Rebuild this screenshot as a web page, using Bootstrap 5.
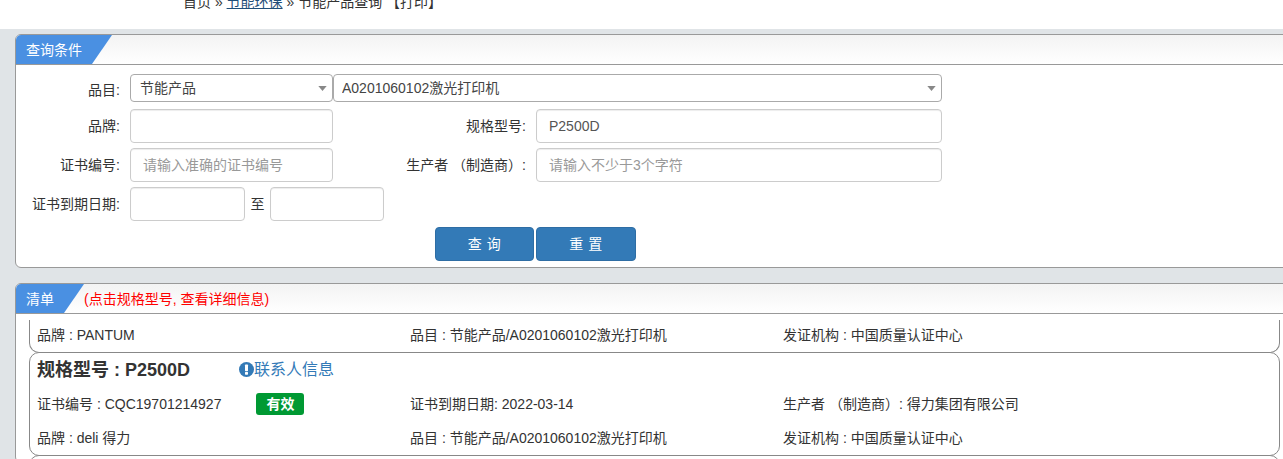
<!DOCTYPE html>
<html lang="zh-CN">
<head>
<meta charset="utf-8">
<title>节能产品查询</title>
<link href="https://cdn.jsdelivr.net/npm/bootstrap@5.3.0/dist/css/bootstrap.min.css" rel="stylesheet">
<style>
html,body{height:459px;overflow:hidden}
body{background:#e0e4e7;color:#333;font:14px/20px "Liberation Sans","Noto Sans CJK SC",sans-serif}
.crumbbar{height:29px;background:#fff;padding:0 0 17px 183px;overflow:hidden}
.crumbbar a{color:#1f4e79}
.shell{padding:5px 0 0 15px}
.pane{width:1300px;border:1px solid #999;border-radius:6px;background:#fff;overflow:hidden}
.pane-one{height:234px;margin-bottom:15px}
.pane-two{height:180px}
.pane-head{height:30px;border-bottom:1px solid #999;background:linear-gradient(#f3f3f3,#fff);line-height:30px}
.pane-tab{height:29px;background:#4a90e2;color:#fff;padding-left:10px}
.tab-wide{width:96px;clip-path:polygon(0 0,100% 0,76px 100%,0 100%)}
.tab-narrow{width:68px;clip-path:polygon(0 0,100% 0,48px 100%,0 100%)}
.tip{color:#f00}
.query{padding:9px 0 0 0}
.qrow{height:34px;margin-bottom:5px}
.qrow-first{height:35px}
.qlabel{width:104px;margin-right:10px;text-align:right;flex:none}
.qlabel-top{padding-top:6px}
.qlabel2{width:193px;margin:0 10px 0 0;text-align:right;flex:none}
.qsel,.qinput{height:34px;font-size:14px;padding:0 12px;border:1px solid #ccc;border-radius:4px;color:#555;box-shadow:inset 0 1px 1px rgba(0,0,0,.075)}
.qinput::placeholder{color:#999}
.qsel{height:28px;padding:0 24px 0 8px;color:#444;border-color:#aaa;background-size:9px 5px;background-position:right 5px center;background-image:url("data:image/svg+xml,%3Csvg xmlns='http://www.w3.org/2000/svg' viewBox='0 0 10 6'%3E%3Cpath fill='%23888' d='M0 0h10L5 6z'/%3E%3C/svg%3E");box-shadow:none}
.w-a{width:203px;flex:none}
.qsel.w-a{padding-left:9px}
.w-b{width:609px;flex:none}
.w-c{width:406px;flex:none}
.w-d{width:115px;flex:none}
.w-e{width:114px;flex:none}
.to{width:25px;text-align:center;flex:none}
.qbtn{height:34px;background:#337ab7;border:1px solid #2e6da4;color:#fff;font-size:14px;padding:0;border-radius:4px;letter-spacing:.5px}
.qbtn-a{width:99px}.qbtn-b{width:100px;margin-left:2px}
.qbtns{padding:1px 0 0 419px}
.plist{padding:6px 0 0 13px}
.rec{width:1251px;border:1px solid #888;border-radius:10px;background:#fff;padding:0 7px}
.rec-cut{border-top:0;border-radius:0 0 10px 10px;height:33px;padding-top:5px}
.rec-full{height:104px;padding-top:3px;margin-top:-1px}
.rec-next{height:20px;margin-top:-1px}
.rec-head{height:28px;margin-bottom:3px}
.rec-title{font-size:18px;font-weight:700;line-height:22px;width:203px;flex:none}
.rec-link{color:#337ab7;font-size:16px;text-decoration:none;line-height:22px}
.rec-icon{width:15px;height:15px;flex:none;margin-left:-1px;margin-bottom:2px}
.rec-row{margin:0;height:34px;align-items:center;--bs-gutter-x:0}
.rec-col{width:373px;flex:none;padding:0}
.rec-state{background:#093;color:#fff;font-weight:700;font-size:14px;border-radius:3px;width:48px;height:22px;line-height:22px;margin-left:35px;display:inline-block;text-align:center}
</style>
</head>
<body>
<div class="crumbbar d-flex align-items-end"><span>首页 » <a href="#">节能环保</a> » 节能产品查询 【打印】</span></div>
<div class="shell">
  <section class="pane pane-one">
    <div class="pane-head"><div class="pane-tab tab-wide">查询条件</div></div>
    <form class="query">
      <div class="d-flex align-items-start qrow-first">
        <label class="qlabel qlabel-top">品目:</label>
        <select class="form-select qsel w-a"><option>节能产品</option></select>
        <select class="form-select qsel w-b"><option>A0201060102激光打印机</option></select>
      </div>
      <div class="d-flex align-items-center qrow">
        <label class="qlabel">品牌:</label>
        <input class="form-control qinput w-a">
        <label class="qlabel2">规格型号:</label>
        <input class="form-control qinput w-c" value="P2500D">
      </div>
      <div class="d-flex align-items-center qrow">
        <label class="qlabel">证书编号:</label>
        <input class="form-control qinput w-a" placeholder="请输入准确的证书编号">
        <label class="qlabel2">生产者 （制造商）:</label>
        <input class="form-control qinput w-c" placeholder="请输入不少于3个字符">
      </div>
      <div class="d-flex align-items-center qrow">
        <label class="qlabel">证书到期日期:</label>
        <input class="form-control qinput w-d">
        <span class="to">至</span>
        <input class="form-control qinput w-e">
      </div>
      <div class="d-flex qbtns">
        <button type="button" class="btn qbtn qbtn-a">查 询</button>
        <button type="button" class="btn qbtn qbtn-b">重 置</button>
      </div>
    </form>
  </section>
  <section class="pane pane-two">
    <div class="pane-head d-flex"><div class="pane-tab tab-narrow">清单</div><span class="tip">(点击规格型号, 查看详细信息)</span></div>
    <div class="plist">
      <div class="rec rec-cut">
        <div class="d-flex">
          <div class="rec-col">品牌 : PANTUM</div>
          <div class="rec-col">品目 : 节能产品/A0201060102激光打印机</div>
          <div class="rec-col">发证机构 : 中国质量认证中心</div>
        </div>
      </div>
      <div class="rec rec-full">
        <div class="d-flex align-items-center rec-head">
          <div class="rec-title">规格型号 : P2500D</div>
          <svg class="rec-icon" viewBox="0 0 14 14"><circle cx="7" cy="7" r="7" fill="#337ab7"/><rect x="5.6" y="2.4" width="2.8" height="6.2" rx=".6" fill="#fff"/><rect x="5.6" y="9.4" width="2.8" height="2.4" rx=".5" fill="#fff"/></svg>
          <a class="rec-link" href="#">联系人信息</a>
        </div>
        <div class="row rec-row">
          <div class="rec-col d-flex align-items-center"><span>证书编号 : CQC19701214927</span><span class="rec-state">有效</span></div>
          <div class="rec-col">证书到期日期: 2022-03-14</div>
          <div class="rec-col">生产者 （制造商）: 得力集团有限公司</div>
        </div>
        <div class="row rec-row">
          <div class="rec-col">品牌 : deli 得力</div>
          <div class="rec-col">品目 : 节能产品/A0201060102激光打印机</div>
          <div class="rec-col">发证机构 : 中国质量认证中心</div>
        </div>
      </div>
      <div class="rec rec-next"></div>
    </div>
  </section>
</div>
<script src="https://cdn.jsdelivr.net/npm/bootstrap@5.3.0/dist/js/bootstrap.bundle.min.js"></script>
</body>
</html>
